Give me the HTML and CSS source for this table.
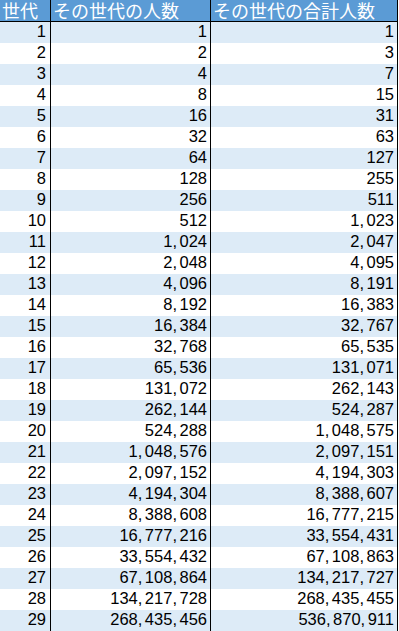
FILE: index.html
```html
<!DOCTYPE html>
<html lang="ja">
<head>
<meta charset="utf-8">
<title>世代</title>
<link rel="stylesheet" href="styles.css">
</head>
<body>
<table class="sheet">
  <colgroup>
    <col class="c-gen">
    <col class="c-count">
    <col class="c-total">
  </colgroup>
  <thead>
    <tr><th>世代</th><th>その世代の人数</th><th>その世代の合計人数</th></tr>
  </thead>
  <tbody>
    <tr><td>1</td><td>1</td><td>1</td></tr>
    <tr><td>2</td><td>2</td><td>3</td></tr>
    <tr><td>3</td><td>4</td><td>7</td></tr>
    <tr><td>4</td><td>8</td><td>15</td></tr>
    <tr><td>5</td><td>16</td><td>31</td></tr>
    <tr><td>6</td><td>32</td><td>63</td></tr>
    <tr><td>7</td><td>64</td><td>127</td></tr>
    <tr><td>8</td><td>128</td><td>255</td></tr>
    <tr><td>9</td><td>256</td><td>511</td></tr>
    <tr><td>10</td><td>512</td><td>1<span class="sep">,</span>023</td></tr>
    <tr><td>11</td><td>1<span class="sep">,</span>024</td><td>2<span class="sep">,</span>047</td></tr>
    <tr><td>12</td><td>2<span class="sep">,</span>048</td><td>4<span class="sep">,</span>095</td></tr>
    <tr><td>13</td><td>4<span class="sep">,</span>096</td><td>8<span class="sep">,</span>191</td></tr>
    <tr><td>14</td><td>8<span class="sep">,</span>192</td><td>16<span class="sep">,</span>383</td></tr>
    <tr><td>15</td><td>16<span class="sep">,</span>384</td><td>32<span class="sep">,</span>767</td></tr>
    <tr><td>16</td><td>32<span class="sep">,</span>768</td><td>65<span class="sep">,</span>535</td></tr>
    <tr><td>17</td><td>65<span class="sep">,</span>536</td><td>131<span class="sep">,</span>071</td></tr>
    <tr><td>18</td><td>131<span class="sep">,</span>072</td><td>262<span class="sep">,</span>143</td></tr>
    <tr><td>19</td><td>262<span class="sep">,</span>144</td><td>524<span class="sep">,</span>287</td></tr>
    <tr><td>20</td><td>524<span class="sep">,</span>288</td><td>1<span class="sep">,</span>048<span class="sep">,</span>575</td></tr>
    <tr><td>21</td><td>1<span class="sep">,</span>048<span class="sep">,</span>576</td><td>2<span class="sep">,</span>097<span class="sep">,</span>151</td></tr>
    <tr><td>22</td><td>2<span class="sep">,</span>097<span class="sep">,</span>152</td><td>4<span class="sep">,</span>194<span class="sep">,</span>303</td></tr>
    <tr><td>23</td><td>4<span class="sep">,</span>194<span class="sep">,</span>304</td><td>8<span class="sep">,</span>388<span class="sep">,</span>607</td></tr>
    <tr><td>24</td><td>8<span class="sep">,</span>388<span class="sep">,</span>608</td><td>16<span class="sep">,</span>777<span class="sep">,</span>215</td></tr>
    <tr><td>25</td><td>16<span class="sep">,</span>777<span class="sep">,</span>216</td><td>33<span class="sep">,</span>554<span class="sep">,</span>431</td></tr>
    <tr><td>26</td><td>33<span class="sep">,</span>554<span class="sep">,</span>432</td><td>67<span class="sep">,</span>108<span class="sep">,</span>863</td></tr>
    <tr><td>27</td><td>67<span class="sep">,</span>108<span class="sep">,</span>864</td><td>134<span class="sep">,</span>217<span class="sep">,</span>727</td></tr>
    <tr><td>28</td><td>134<span class="sep">,</span>217<span class="sep">,</span>728</td><td>268<span class="sep">,</span>435<span class="sep">,</span>455</td></tr>
    <tr><td>29</td><td>268<span class="sep">,</span>435<span class="sep">,</span>456</td><td>536<span class="sep">,</span>870<span class="sep">,</span>911</td></tr>
  </tbody>
</table>
</body>
</html>
```
FILE: styles.css
```css
html, body {
  margin: 0;
  padding: 0;
  background: #ffffff;
}

.sheet {
  border-collapse: separate;
  border-spacing: 0;
  table-layout: fixed;
  width: 398px;
}

.c-gen { width: 51px; }
.c-count { width: 160px; }
.c-total { width: 187px; }

.sheet th,
.sheet td {
  border-right: 1px solid #000000;
  padding: 0;
  white-space: nowrap;
}

.sheet th {
  border-bottom: 1px solid #000000;
  background: #5b9bd5;
  color: #ffffff;
  font-family: "Noto Sans CJK JP", sans-serif;
  font-weight: 400;
  font-size: 18px;
  line-height: 21px;
  text-align: left;
  padding-left: 2px;
  vertical-align: top;
}

.sheet td {
  font-family: "Liberation Sans", sans-serif;
  font-size: 16.5px;
  line-height: 19px;
  padding-bottom: 2px;
  color: #000000;
  text-align: right;
  padding-right: 3px;
  vertical-align: top;
  overflow: hidden;
}

.sheet td:first-child {
  padding-right: 4px;
}

.sep {
  margin-right: 2.5px;
}

.sheet tbody tr:nth-child(odd) td {
  background: #ddebf7;
}
```
